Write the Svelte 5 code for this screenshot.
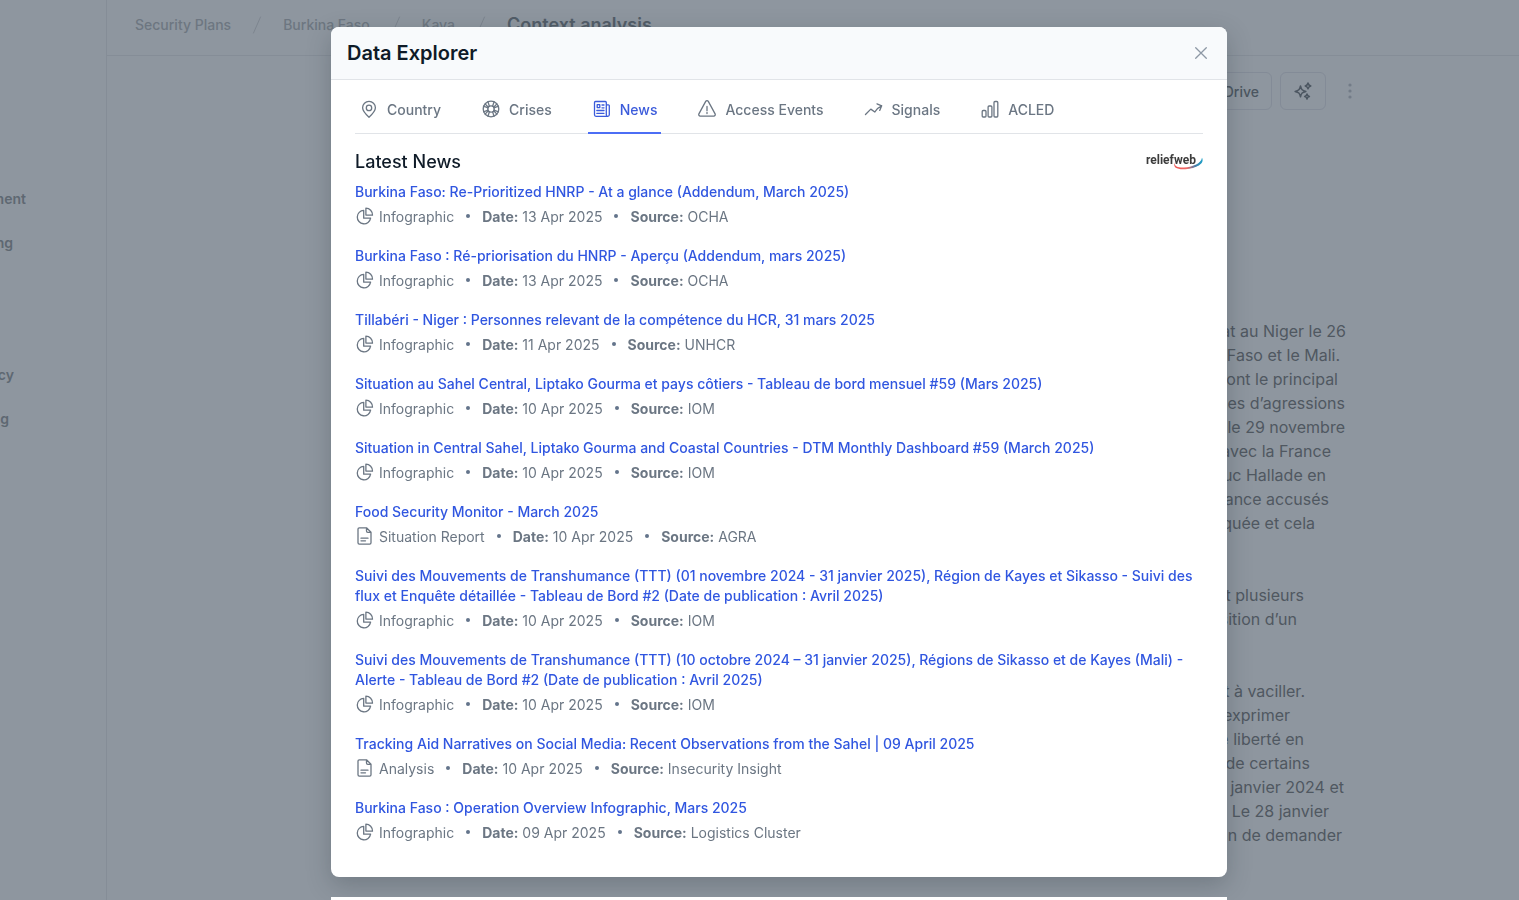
<script>
  const crumbs = ['Security Plans', 'Burkina Faso', 'Kaya'];

  // Drawer is scrolled sideways: each label keeps only its visible end.
  const drawer = [
    { label: 'ment', end: 26, row: 1 },
    { label: 'ng', end: 13, row: 2 },
    { label: 'cy', end: 14, row: 5 },
    { label: 'g', end: 9, row: 6 }
  ];

  // Width of each line, measured from the left edge of the text column.
  const paragraphs = [
    [
      ['at au Niger le 26', 954],
      ['Faso et le Mali.', 948],
      ['ont le principal', 946],
      ['es d’agressions', 953],
      ['le 29 novembre', 953],
      ['avec la France', 939],
      ['uc Hallade en', 934],
      ['ance accusés', 937],
      ['quée et cela', 923]
    ],
    [
      ['t plusieurs', 912],
      ['sition d’un', 905]
    ],
    [
      ['t à vaciller.', 913],
      ['exprimer', 898],
      ['e liberté en', 912],
      ['de certains', 918],
      ['janvier 2024 et', 952],
      ['Le 28 janvier', 937],
      ['n de demander', 950]
    ]
  ];

  const tabs = [
    { id: 'country', label: 'Country' },
    { id: 'crises', label: 'Crises' },
    { id: 'news', label: 'News' },
    { id: 'access', label: 'Access Events' },
    { id: 'signals', label: 'Signals' },
    { id: 'acled', label: 'ACLED' }
  ];
  let active = $state('news');

  const news = [
    { title: 'Burkina Faso: Re-Prioritized HNRP - At a glance (Addendum, March 2025)', type: 'Infographic', date: '13 Apr 2025', source: 'OCHA' },
    { title: 'Burkina Faso : Ré-priorisation du HNRP - Aperçu (Addendum, mars 2025)', type: 'Infographic', date: '13 Apr 2025', source: 'OCHA' },
    { title: 'Tillabéri - Niger : Personnes relevant de la compétence du HCR, 31 mars 2025', type: 'Infographic', date: '11 Apr 2025', source: 'UNHCR' },
    { title: 'Situation au Sahel Central, Liptako Gourma et pays côtiers - Tableau de bord mensuel #59 (Mars 2025)', type: 'Infographic', date: '10 Apr 2025', source: 'IOM' },
    { title: 'Situation in Central Sahel, Liptako Gourma and Coastal Countries - DTM Monthly Dashboard #59 (March 2025)', type: 'Infographic', date: '10 Apr 2025', source: 'IOM' },
    { title: 'Food Security Monitor - March 2025', type: 'Situation Report', date: '10 Apr 2025', source: 'AGRA' },
    { title: 'Suivi des Mouvements de Transhumance (TTT) (01 novembre 2024 - 31 janvier 2025), Région de Kayes et Sikasso - Suivi des flux et Enquête détaillée - Tableau de Bord #2 (Date de publication : Avril 2025)', type: 'Infographic', date: '10 Apr 2025', source: 'IOM' },
    { title: 'Suivi des Mouvements de Transhumance (TTT) (10 octobre 2024 – 31 janvier 2025), Régions de Sikasso et de Kayes (Mali) - Alerte - Tableau de Bord #2 (Date de publication : Avril 2025)', type: 'Infographic', date: '10 Apr 2025', source: 'IOM' },
    { title: 'Tracking Aid Narratives on Social Media: Recent Observations from the Sahel | 09 April 2025', type: 'Analysis', date: '10 Apr 2025', source: 'Insecurity Insight' },
    { title: 'Burkina Faso : Operation Overview Infographic, Mars 2025', type: 'Infographic', date: '09 Apr 2025', source: 'Logistics Cluster' }
  ];
</script>

<div class="page">
  <aside>
    {#each drawer as item}
      <a href="#top" style="width: {item.end}px; grid-row: {item.row}">{item.label}</a>
    {/each}
  </aside>
  <div class="main">
    <nav>
      {#each crumbs as crumb}
        <a href="#top">{crumb}</a>
        <svg width="10" height="18" viewBox="0 0 10 18"><path d="M8.5 1 1.5 17" /></svg>
      {/each}
      <strong>Context analysis</strong>
    </nav>
    <div class="toolbar">
      <button class="drive">Drive</button>
      <button aria-label="Assist">
        <svg class="sparkles" width="20" height="20" viewBox="0 0 20 20">
          <path d="M7.500 5c.8 3.600 1.800 4.600 5.400 5.400-3.600.8-4.600 1.800-5.400 5.400-.8-3.600-1.800-4.600-5.400-5.400C5.700 9.600 6.700 8.600 7.500 5Z" />
          <path d="M15 2c.4 2 .9 2.500 2.800 2.900-1.900.4-2.400.9-2.800 2.900-.4-2-.9-2.500-2.800-2.900 1.900-.4 2.400-.9 2.800-2.900ZM14 13c.3 1.700.8 2.200 2.400 2.500-1.600.3-2.100.8-2.400 2.500-.3-1.700-.8-2.200-2.400-2.500 1.600-.3 2.100-.8 2.400-2.500Z" />
        </svg>
      </button>
      <button class="more" aria-label="More">
        <svg width="4" height="18" viewBox="0 0 4 18"><circle cx="2" cy="3" r="1.600" /><circle cx="2" cy="9" r="1.600" /><circle cx="2" cy="15" r="1.600" /></svg>
      </button>
    </div>
    <article>
      {#each paragraphs as lines}
        <p>
          {#each lines as [text, width]}
            <span style="width: {width}px">{text}</span>
          {/each}
        </p>
      {/each}
    </article>
  </div>
</div>

<div class="overlay">
  <section class="modal" role="dialog" aria-labelledby="title">
    <header>
      <h1 id="title">Data Explorer</h1>
      <button aria-label="Close">
        <svg width="20" height="20" viewBox="0 0 20 20"><path d="m4.700 4.700 10.600 10.600m0-10.600-10.600 10.600" /></svg>
      </button>
    </header>
    <div class="body">
      <div class="tabs" role="tablist">
        {#each tabs as tab}
          <button role="tab" aria-selected={active === tab.id} class:active={active === tab.id} onclick={() => (active = tab.id)}>
            <svg width="20" height="20" viewBox="0 0 20 20">
              {#if tab.id === 'country'}
                <path d="M10 18.300C7 15.500 3.600 12 3.600 8.800a6.400 6.400 0 0 1 12.800 0c0 3.200-3.400 6.700-6.400 9.500Z" /><circle cx="10" cy="8.900" r="2.700" />
              {:else if tab.id === 'crises'}
                <circle cx="10" cy="10" r="7.800" /><circle cx="10" cy="10" r="3.200" />
                <path d="m7 2.900 1.400 4.300M4.100 4.900 7.300 8.200M2.700 7.200 7 9M13 2.900l-1.400 4.300M15.900 4.900l-3.200 3.300M17.300 7.200 13 9M7 17.100l1.400-4.300M4.100 15.100l3.200-3.300M2.700 12.800 7 11M13 17.100l-1.400-4.300M15.900 15.100l-3.200-3.300M17.300 12.800 13 11" />
              {:else if tab.id === 'news'}
                <path d="M14.300 16V3.500a1 1 0 0 0-1-1H3.500a1 1 0 0 0-1 1v12.300a1.500 1.500 0 0 0 1.500 1.500h11.800a1.500 1.500 0 0 0 1.500-1.500V6.700a.8.8 0 0 0-.8-.8h-2.200M14.300 15.800a1.500 1.500 0 0 0 1.500 1.500M4.800 11.500h7.200M4.800 14.300h7.200M10 6h2M10 8.800h2M5.200 5.700h2.600v2.900H5.200z" />
              {:else if tab.id === 'access'}
                <path d="M8.700 2.400 1.900 14.900a1.500 1.500 0 0 0 1.300 2.200h13.600a1.500 1.500 0 0 0 1.300-2.200L11.300 2.400a1.500 1.500 0 0 0-2.600 0ZM10 7.500v4.200M10 13.500v1" />
              {:else if tab.id === 'signals'}
                <path d="m1.500 15.500 5.300-5.400 4 2.900c1.400-2.600 3.500-4.700 6.900-6.200M13 4.800l4.700 2-2 4.600" />
              {:else}
                <rect x="2.200" y="11.500" width="3.800" height="6.500" rx="1" /><rect x="8.100" y="7" width="3.800" height="11" rx="1" /><rect x="14" y="2.500" width="3.800" height="15.500" rx="1" />
              {/if}
            </svg>
            {tab.label}
          </button>
        {/each}
      </div>
      <div class="heading">
        <h2>Latest News</h2>
        <svg class="logo" width="58" height="20" viewBox="0 0 58 20" role="img" aria-label="reliefweb">
          <defs>
            <linearGradient id="swoosh"><stop offset="0" stop-color="#f0524f" /><stop offset=".45" stop-color="#ee6a68" /><stop offset=".75" stop-color="#457eaa" /><stop offset="1" stop-color="#18a0c8" /></linearGradient>
          </defs>
          <path fill="url(#swoosh)" d="M29.500 10.500c-.3 4 4 5.300 9.500 5 8-.4 17-3.500 18-9.700 3 6-5.500 10.600-16.500 11.400-8.500.5-12.500-1.500-11-6.700Z" />
          <text x="1" y="12">reliefweb</text>
        </svg>
      </div>
      <ul>
        {#each news as item}
          <li>
            <a href="#top">{item.title}</a>
            <div class="meta">
              <svg width="20" height="20" viewBox="0 0 20 20">
                {#if item.type === 'Infographic'}
                  <path d="M8.700 4.400A6.700 6.700 0 1 0 15.600 12.200H8.700ZM10.900 2.200a6.600 6.600 0 0 1 6.600 6.900H10.900Z" />
                {:else}
                  <path d="M11.500 1.800H4.300A1.300 1.300 0 0 0 3 3.100v13.700a1.300 1.300 0 0 0 1.300 1.300h10.400a1.300 1.300 0 0 0 1.300-1.300V6.300ZM11.500 1.800V5a1.300 1.300 0 0 0 1.300 1.300H16M6 12.200h7M6 14.800h4.500" />
                {/if}
              </svg>
              <span>{item.type}</span><i></i>
              <span><b>Date:</b> {item.date}</span><i></i>
              <span><b>Source:</b> {item.source}</span>
            </div>
          </li>
        {/each}
      </ul>
    </div>
  </section>
  <div class="next"></div>
</div>

<style>
  :global(body) { margin: 0; background: #8e969f; font-family: Inter, sans-serif; overflow: hidden; }
  * { box-sizing: border-box; }
  svg { fill: none; stroke: currentColor; stroke-width: 1.300; stroke-linecap: round; stroke-linejoin: round; flex: none; }
  button { font: inherit; color: inherit; background: none; border: 0; padding: 0; display: flex; align-items: center; justify-content: center; }
  a { text-decoration: none; color: inherit; }
  h1, h2, ul, p { margin: 0; padding: 0; }

  .page { display: flex; min-height: 100vh; color: #5e6872; }
  aside { width: 107px; border-right: 1px solid #858d97; padding-top: 177px; display: grid; grid-auto-rows: 44px; align-items: center; align-content: start; }
  aside a { display: flex; justify-content: flex-end; overflow: hidden; white-space: nowrap; font-size: 14px; font-weight: 600; line-height: 20px; }
  .main { flex: 1; min-width: 0; }
  nav { height: 56px; padding: 0 28px 6px; display: flex; align-items: center; gap: 21px; border-bottom: 1px solid #858d97; font-size: 14px; font-weight: 500; color: #6d7681; }
  nav svg { stroke: #7d858f; stroke-width: 1; }
  nav strong { font-size: 18px; font-weight: 600; color: #525d68; }
  .toolbar { display: flex; justify-content: flex-end; gap: 8px; padding: 16px 153px 0 0; }
  .toolbar button { width: 46px; height: 38px; border: 1px solid #838b97; border-radius: 6px; color: #4c5661; }
  .toolbar .drive { width: 160px; justify-content: flex-end; padding-right: 12px; font-size: 14px; font-weight: 500; }
  .toolbar .more { width: 32px; border: 0; color: #727b87; }
  .more svg { fill: currentColor; stroke: none; }
  .toolbar .sparkles { stroke-width: 1.500; }
  article { padding: 209px 0 0 285px; font-size: 16px; line-height: 24px; color: #505861; }
  article p { margin-bottom: 48px; }
  article span { display: block; text-align: right; white-space: nowrap; }

  .overlay { position: fixed; inset: 0; padding: 27px 0 0 39px; overflow: hidden; display: flex; flex-direction: column; align-items: center; gap: 20px; }
  .modal { width: 100%; max-width: 896px; flex: none; background: #fff; border-radius: 8px; box-shadow: 0 8px 24px rgba(30, 42, 50, .25); position: relative; }
  .next { width: 100%; max-width: 896px; flex: none; height: 40px; background: #fff; position: relative; }
  header { display: flex; align-items: center; justify-content: space-between; height: 53px; padding: 0 16px; background: #f8fafc; border-bottom: 1px solid #e1e4e8; border-radius: 8px 8px 0 0; }
  h1 { font-size: 20px; line-height: 28px; font-weight: 600; color: #0f1b28; }
  header button { color: #8d98a5; }
  .body { padding: 0 24px 35px; }
  .tabs { display: flex; gap: 32px; border-bottom: 1px solid #e1e4e8; height: 54px; }
  .tabs button { gap: 8px; padding: 6px 4px 0; margin-bottom: -1px; border-bottom: 2px solid transparent; font-size: 14px; font-weight: 500; color: #6b7683; white-space: nowrap; }
  .tabs button.active { color: #3b5bdb; border-color: #4c6ef5; }
  .heading { display: flex; align-items: center; justify-content: space-between; height: 48px; padding-top: 8px; }
  h2 { font-size: 18px; line-height: 28px; font-weight: 500; color: #0f1b28; }
  .logo text { font: 700 12px Roboto, sans-serif; fill: #3c3c3c; stroke: none; }
  .logo path { stroke: none; }
  ul { list-style: none; display: flex; flex-direction: column; gap: 20px; }
  li { display: flex; flex-direction: column; gap: 4px; }
  li a { font-size: 14px; line-height: 20px; font-weight: 500; color: #3056e0; }
  .meta { display: flex; align-items: center; height: 20px; font-size: 14px; color: #6b7683; }
  .meta svg { margin-right: 4px; }
  .meta b { font-weight: 700; }
  i { width: 4px; height: 4px; border-radius: 2px; margin: 0 12px; background: #64748b; }
</style>
